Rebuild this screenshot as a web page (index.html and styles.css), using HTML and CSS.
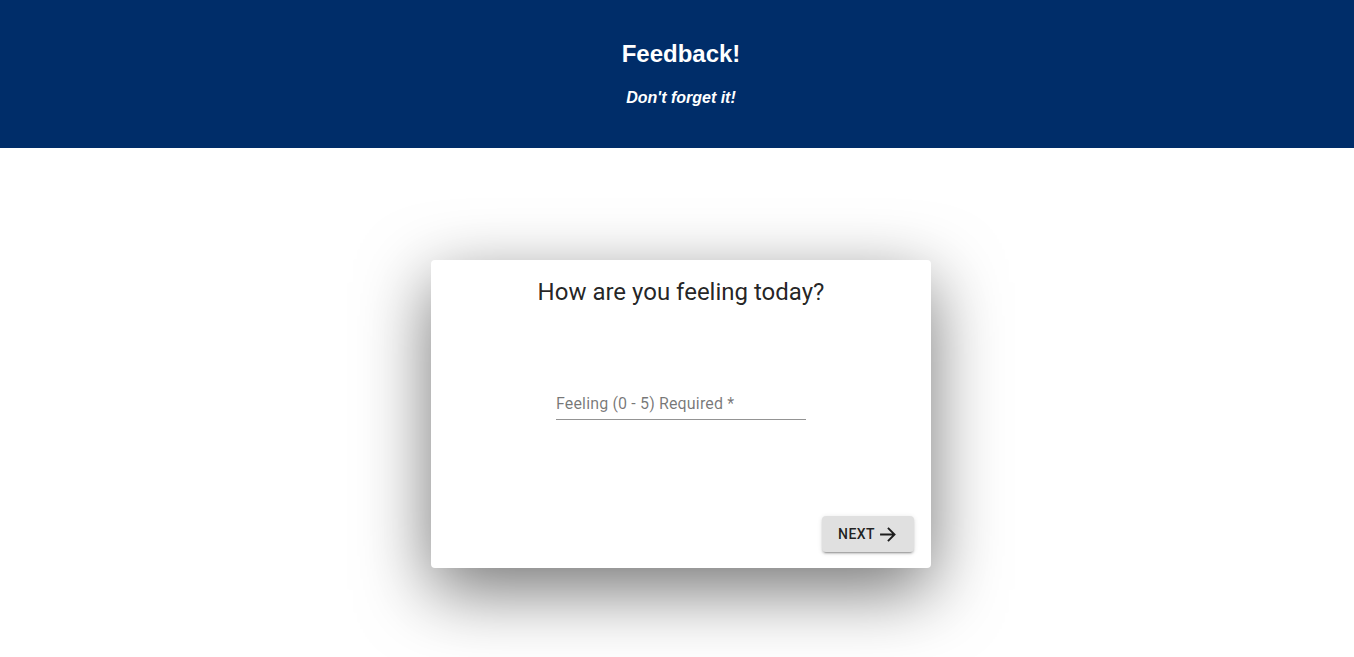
FILE: index.html
```
<!DOCTYPE html>
<html>
<head>
<meta charset="utf-8">
<link rel="stylesheet" href="styles.css">
</head>
<body>
<header class="hero">
  <h1 class="hero-title">Feedback!</h1>
  <p class="hero-sub">Don't forget it!</p>
</header>
<main class="stage">
  <section class="card">
    <h2 class="card-title">How are you feeling today?</h2>
    <div class="field-wrap">
      <label class="field">
        <span class="field-label">Feeling (0 - 5) Required *</span>
      </label>
    </div>
    <div class="actions">
      <button class="btn" type="button">NEXT
        <svg class="btn-icon" viewBox="0 0 24 24" width="24" height="24"><path d="M3.5 12h16.5M12.5 4.5L20 12l-7.5 7.5" fill="none" stroke="currentColor" stroke-width="2.2"/></svg>
      </button>
    </div>
  </section>
</main>
</body>
</html>
```
FILE: styles.css
```
html, body {
  margin: 0;
  padding: 0;
  background: #fff;
}
body {
  font-family: Roboto, "Liberation Sans", Arial, sans-serif;
  height: 657px;
  overflow: hidden;
}
.hero {
  background: #002d69;
  height: 148px;
  box-sizing: border-box;
  padding-top: 40px;
  padding-left: 8px;
  text-align: center;
  color: #fff;
  font-family: "Liberation Sans", Arial, sans-serif;
}
.hero-title {
  margin: 0;
  font-size: 24px;
  font-weight: bold;
  line-height: 28px;
}
.hero-sub {
  margin: 20px 0 0;
  font-size: 16px;
  font-weight: bold;
  font-style: italic;
  line-height: 20px;
}
.stage {
  display: flex;
  justify-content: center;
  padding-top: 112px;
  padding-left: 8px;
}
.card {
  width: 500px;
  height: 308px;
  box-sizing: border-box;
  background: #fff;
  border-radius: 4px;
  box-shadow: 0 22px 70px rgba(0, 0, 0, 0.55);
  display: flex;
  flex-direction: column;
  padding: 16px 16px 16px;
}
.card-title {
  margin: 0;
  text-align: center;
  font-weight: 400;
  font-size: 24px;
  line-height: 32px;
  color: rgba(0, 0, 0, 0.87);
}
.field-wrap {
  display: flex;
  justify-content: center;
  margin-top: 80px;
}
.field {
  width: 250px;
  height: 32px;
  border-bottom: 1px solid rgba(0, 0, 0, 0.42);
  box-sizing: border-box;
  display: flex;
  align-items: flex-end;
  padding-bottom: 6px;
}
.field-label {
  font-size: 16px;
  line-height: 19px;
  letter-spacing: 0.15px;
  color: rgba(0, 0, 0, 0.54);
}
.actions {
  margin-top: auto;
  display: flex;
  justify-content: flex-end;
  padding-right: 1px;
}
.btn {
  font-family: Roboto, "Liberation Sans", Arial, sans-serif;
  font-weight: 500;
  font-size: 14px;
  letter-spacing: 0.4px;
  color: rgba(0, 0, 0, 0.87);
  background: #e0e0e0;
  border: 0;
  border-radius: 4px;
  height: 36px;
  width: 92px;
  padding: 0 16px;
  display: flex;
  align-items: center;
  justify-content: center;
  gap: 2px;
  box-shadow: 0 3px 1px -2px rgba(0,0,0,0.2), 0 2px 2px 0 rgba(0,0,0,0.14), 0 1px 5px 0 rgba(0,0,0,0.12);
}
.btn-icon {
  width: 21px;
  height: 21px;
}
```
